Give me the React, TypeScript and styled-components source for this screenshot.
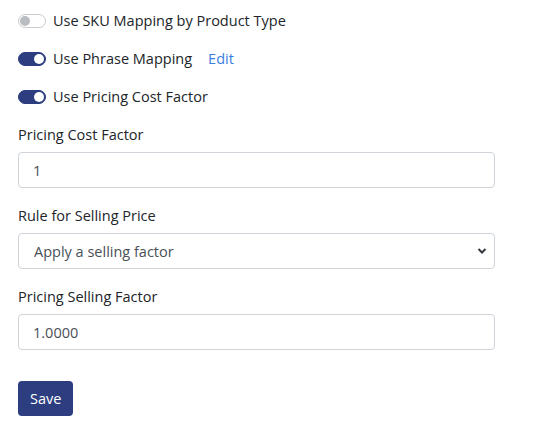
import React, { useState } from "react";
import styled, { createGlobalStyle } from "styled-components";

const Global = createGlobalStyle`
  html, body { margin: 0; padding: 0; background: #fff; }
  body { font-family: "Open Sans", "Noto Sans", sans-serif; color: #212529; font-size: 14.5px; }
  * { box-sizing: border-box; }
`;

const Form = styled.form`
  display: flex;
  flex-direction: column;
  gap: 17px;
  padding: 10px 0 0 18px;
  width: 495px;
`;

const SwitchRow = styled.label`
  display: flex;
  align-items: center;
  height: 21px;
  gap: 7px;
  font-size: 14.5px;
  line-height: 21px;
  cursor: pointer;
`;

const Track = styled.span<{ $on: boolean }>`
  position: relative;
  width: 28px;
  height: 14px;
  border-radius: 7px;
  flex: none;
  background: ${(p) => (p.$on ? "#2c3e80" : "#fff")};
  border: 1px solid ${(p) => (p.$on ? "#2c3e80" : "#c8ccd0")};
`;

const Knob = styled.span<{ $on: boolean }>`
  position: absolute;
  top: 1px;
  left: ${(p) => (p.$on ? "15px" : "1px")};
  width: 10px;
  height: 10px;
  border-radius: 50%;
  background: ${(p) => (p.$on ? "#fff" : "#b9bdc2")};
`;

const EditLink = styled.a`
  color: #3b7ddd;
  text-decoration: none;
  margin-left: 9px;
`;

const Group = styled.div`
  display: flex;
  flex-direction: column;
  gap: 7px;
`;

const Label = styled.label`
  font-size: 14.5px;
  line-height: 21px;
`;

const Input = styled.input`
  height: 36px;
  width: 100%;
  border: 1px solid #ced4da;
  border-radius: 4px;
  padding: 0 14px;
  font: inherit;
  font-size: 14.5px;
  color: #495057;
  background: #fff;
`;

const SelectWrap = styled.div`
  position: relative;
`;

const Select = styled.select`
  appearance: none;
  height: 36px;
  width: 100%;
  border: 1px solid #ced4da;
  border-radius: 4px;
  padding: 0 36px 0 15px;
  font: inherit;
  font-size: 14.5px;
  color: #495057;
  background: #fff;
`;

const Chevron = styled.svg`
  position: absolute;
  right: 8px;
  top: 14px;
  pointer-events: none;
`;

const SaveButton = styled.button`
  align-self: flex-start;
  margin-top: 14px;
  height: 35px;
  padding: 0 12px;
  border: none;
  border-radius: 4px;
  background: #2c3e80;
  color: #fff;
  font: inherit;
  font-size: 14.5px;
`;

function Switch({ on, label, children }: { on: boolean; label: string; children?: React.ReactNode }) {
  const [v, setV] = useState(on);
  return (
    <SwitchRow onClick={() => setV(!v)}>
      <Track $on={v}>
        <Knob $on={v} />
      </Track>
      <span>{label}</span>
      {children}
    </SwitchRow>
  );
}

export default function App() {
  return (
    <>
      <Global />
      <Form onSubmit={(e) => e.preventDefault()}>
        <Switch on={false} label="Use SKU Mapping by Product Type" />
        <Switch on={true} label="Use Phrase Mapping">
          <EditLink href="#">Edit</EditLink>
        </Switch>
        <Switch on={true} label="Use Pricing Cost Factor" />
        <Group>
          <Label>Pricing Cost Factor</Label>
          <Input defaultValue="1" />
        </Group>
        <Group>
          <Label>Rule for Selling Price</Label>
          <SelectWrap>
            <Select defaultValue="factor">
              <option value="factor">Apply a selling factor</option>
            </Select>
            <Chevron width="10" height="8" viewBox="0 0 10 8">
              <path d="M1.5 2 L5 5.5 L8.5 2" fill="none" stroke="#343a40" strokeWidth="2" />
            </Chevron>
          </SelectWrap>
        </Group>
        <Group>
          <Label>Pricing Selling Factor</Label>
          <Input defaultValue="1.0000" />
        </Group>
        <SaveButton type="submit">Save</SaveButton>
      </Form>
    </>
  );
}
